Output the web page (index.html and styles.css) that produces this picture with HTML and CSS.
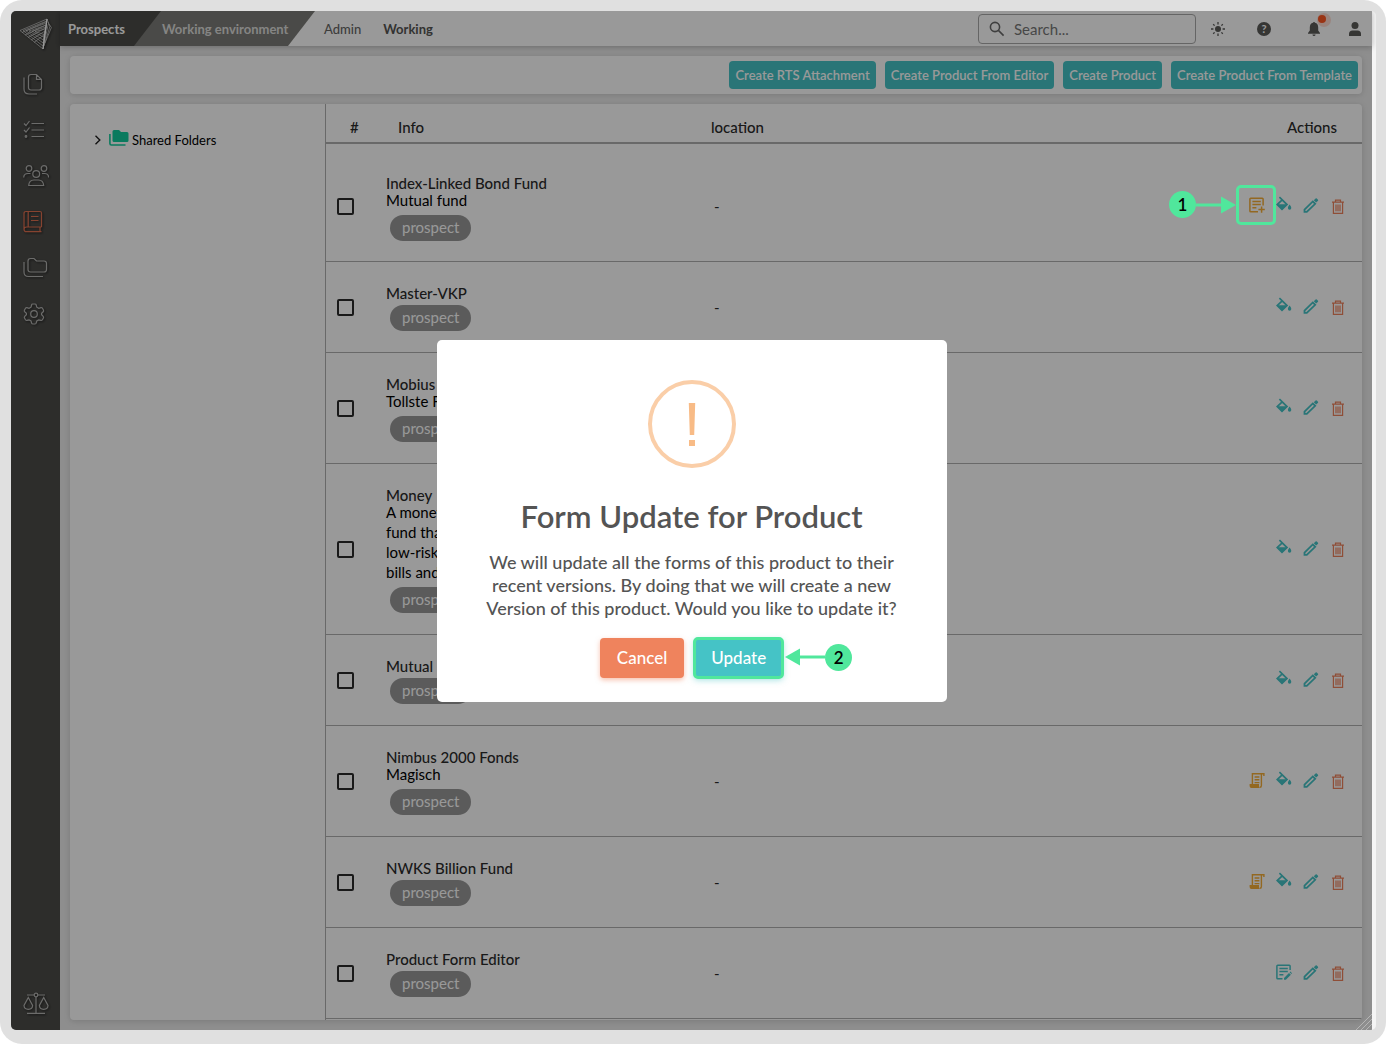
FILE: index.html
```html
<!DOCTYPE html>
<html lang="en">
<head>
    <meta charset="UTF-8">
    <meta name="viewport" content="width=device-width, initial-scale=1.0">
    <title>Prospects</title>
    <link rel="stylesheet" href="styles.css">
</head>
<body>

    <!-- Icons -->
    <svg class="icon-defs" aria-hidden="true">
        <symbol id="icon-fill" viewBox="0 0 16 20">
            <path d="M3.4 1.2 L6 3.6 L11 8.6 L6 13.4 L1.2 8.6 L6.2 3.8" fill="none" stroke="currentColor" stroke-width="1.7"/>
            <path d="M1 8.2 H11.4 L6 13.8 Z" fill="currentColor"/>
            <path d="M13.6 8.6 C14.6 10 15.3 11 15.3 12 A1.7 1.7 0 0 1 11.9 12 C11.9 11 12.6 10 13.6 8.6Z" fill="currentColor"/>
        </symbol>
        <symbol id="icon-edit" viewBox="0 0 16 20">
            <path d="M1.5 13.6 V15.9 H3.8 L12.2 7.8 L9.8 5.4 Z" fill="none" stroke="currentColor" stroke-width="1.8"/>
            <path d="M10.8 4.2 L12.6 2.4 Q13.2 1.9 13.8 2.4 L15 3.7 Q15.4 4.2 15 4.7 L13.2 6.6 Z" fill="currentColor"/>
        </symbol>
        <symbol id="icon-delete" viewBox="0 0 16 20">
            <path d="M2 6.2 H14 M5.5 6 V4.1 H10.5 V6 M3.4 6.5 V17.4 H12.6 V6.5 M6 8.5 V15.2 M8 8.5 V15.2 M10 8.5 V15.2" fill="none" stroke="currentColor" stroke-width="1.2"/>
        </symbol>
        <symbol id="icon-form-add" viewBox="0 0 16 20">
            <path d="M9 15.7 H1.7 Q0.9 15.7 0.9 14.9 V3.1 Q0.9 2.3 1.7 2.3 H13.3 Q14.1 2.3 14.1 3.1 V9.5 M3.4 5.4 H11.8 M3.4 8.5 H11.8 M3.4 11.8 H7.4 M12.6 10.4 V16.8 M9.4 13.6 H15.8" fill="none" stroke="currentColor" stroke-width="1.5"/>
        </symbol>
        <symbol id="icon-form-edit" viewBox="0 0 16 20">
            <path d="M6.5 15.7 H1.7 Q0.9 15.7 0.9 14.9 V3.1 Q0.9 2.3 1.7 2.3 H13.3 Q14.1 2.3 14.1 3.1 V7 M3.4 5.4 H11.8 M3.4 8.5 H11.8 M3.4 11.8 H7.4" fill="none" stroke="currentColor" stroke-width="1.5"/>
            <path d="M8 16.8 V14.9 L13 9.9 L14.9 11.8 L9.9 16.8 Z M13.6 9.3 L14.4 8.5 L16 10.2 L15.4 11 Z" fill="currentColor"/>
        </symbol>
        <symbol id="icon-script" viewBox="0 0 16 20">
            <path d="M3.4 13 V2.8 H14.9 V5 M12.4 2.8 V14.4 Q12.4 16.2 10.8 16.2 M5.6 6 H10.4 M5.6 8.8 H10.4 M5.6 11.6 H10.4" fill="none" stroke="currentColor" stroke-width="1.4"/>
            <path d="M0.6 13 H10 V15.2 Q10 16.9 11.4 16.9 H2.4 Q0.6 16.9 0.6 15 Z" fill="currentColor"/>
        </symbol>
        <symbol id="icon-arrow" viewBox="0 0 40 18">
            <path d="M0 9 H28" stroke="currentColor" stroke-width="3"/>
            <path d="M25 0.5 L40 9 L25 17.5 Z" fill="currentColor"/>
        </symbol>
    </svg>

    <div class="frame">
        <div class="window">
            <div class="app">

                <!-- Sidebar -->
                <nav class="sidebar">
                    <a href="#" class="logo" aria-label="Home">
                        <svg width="34" height="32" viewBox="0 0 34 32">
                            <path d="M1 12.5 L28 1 L24 31 Z M4 12.6 L27.8 3 L24 28 Z M7 12.8 L27.6 5 L24.2 25 Z M10 13 L27.4 7 L24.4 22 Z M13 13.2 L27.2 9 L24.6 19 Z M16 13.4 L27 11 L24.8 16.5 Z M3 14.5 L27 4 M6 17 L27 7 M9 19.5 L26.5 10 M12 22 L26 13 M15 24.5 L26 16"/>
                            <path d="M28 1 L29.5 5 L24 31 M29 4 L31 8 L25 28 M29.8 6 L32.4 9.5 L26 25"/>
                            <path class="edge" d="M28 1 L24 31"/>
                        </svg>
                    </a>
                    <a href="#" aria-label="Documents">
                        <svg width="26" height="24" viewBox="0 0 26 24">
                            <path d="M8 2.5 H13.5 L18.5 7.5 V15.5 Q18.5 18 16 18 H8 Q5.5 18 5.5 15.5 V5 Q5.5 2.5 8 2.5 Z M13.5 2.7 V7.3 H18.3 M1 5.5 V17 Q1 22 6 22 H14"/>
                        </svg>
                    </a>
                    <a href="#" aria-label="Tasks">
                        <svg width="26" height="24" viewBox="0 0 26 24">
                            <path d="M8.5 5.5 H21 M8.5 12 H21 M8.5 18.5 H21 M1 5.5 L3 7.5 L6.5 3 M1 12 L3 14 L6.5 9.5"/>
                            <circle cx="3" cy="18.5" r="0.8"/>
                        </svg>
                    </a>
                    <a href="#" aria-label="People">
                        <svg width="26" height="24" viewBox="0 0 26 24">
                            <circle cx="6" cy="4.5" r="2.8"/>
                            <circle cx="21" cy="4.5" r="2.8"/>
                            <circle cx="13.2" cy="10" r="3.4"/>
                            <path d="M5.7 21.5 Q6 16 11 16 H15.5 Q20.2 16 20.7 21.5 Z M0.7 13.5 Q0.8 9.5 5 9.5 H7.5 M25.6 13.5 Q25.6 9.5 21.5 9.5 H19"/>
                        </svg>
                    </a>
                    <a href="#" class="active" aria-label="Prospects">
                        <svg width="26" height="24" viewBox="0 0 26 24">
                            <path d="M18.5 17 H3.5 Q1 17 1 19.2 Q1 21.7 3.5 21.7 H18.5 M1 19.5 V3.5 Q1 1.5 3 1.5 H17 Q18.5 1.5 18.5 3 V17 M5.2 1.5 V17 M8 6.5 H15.5 M8 10.5 H15.5 M17 17 V21.5"/>
                        </svg>
                    </a>
                    <a href="#" aria-label="Folders">
                        <svg width="26" height="24" viewBox="0 0 26 24">
                            <path d="M7.5 2.5 H11 L13.5 5 H21 Q23.5 5 23.5 7.5 V13.5 Q23.5 16 21 16 H7.5 Q5 16 5 13.5 V5 Q5 2.5 7.5 2.5 Z M1 6 V16 Q1 20.5 5.5 20.5 H20"/>
                        </svg>
                    </a>
                    <a href="#" aria-label="Settings">
                        <svg width="26" height="24" viewBox="0 0 26 24">
                            <path d="M9.5 2 H12 Q13 2 13.2 3 L13.8 5.2 L15.8 6.3 L18 5.7 Q19 5.5 19.5 6.3 L20.5 8.2 Q20.9 9 20.2 9.8 L18.6 11.3 V12.7 L20.2 14.4 Q20.9 15.2 20.4 16 L19.4 17.8 Q18.9 18.6 18 18.4 L15.8 17.8 L13.8 18.9 L13.2 21 Q13 22 12 22 H9.8 Q8.9 22 8.6 21 L8 18.9 L6 17.8 L3.9 18.4 Q3 18.6 2.5 17.8 L1.5 16 Q1 15.2 1.7 14.4 L3.4 12.7 V11.3 L1.7 9.7 Q1 9 1.4 8.2 L2.5 6.3 Q3 5.5 3.9 5.7 L6 6.3 L8 5.2 L8.6 3 Q8.8 2 9.5 2 Z"/>
                            <circle cx="11" cy="12" r="3.3"/>
                        </svg>
                    </a>
                    <a href="#" class="bottom" aria-label="Legal">
                        <svg width="26" height="24" viewBox="0 0 26 24">
                            <circle cx="13" cy="3" r="1.8"/>
                            <path d="M13 5 V21 M4 21.3 H22 M4 3 H11 M15 3 H22 M5.3 5.5 L1 13.5 Q1.2 17.3 5.3 17.3 Q9.4 17.3 9.6 13.5 Z M20.7 5.5 L16.4 13.5 Q16.6 17.3 20.7 17.3 Q24.8 17.3 25 13.5 Z"/>
                        </svg>
                    </a>
                </nav>

                <div class="main">
                    <!-- Top bar -->
                    <header class="topbar">
                        <a href="#" class="crumb crumb-dark">Prospects</a>
                        <a href="#" class="crumb crumb-mid">Working environment</a>
                        <a href="#" class="top-link">Admin</a>
                        <a href="#" class="top-link current">Working</a>

                        <label class="search">
                            <svg width="16" height="16" viewBox="0 0 16 16" fill="none" stroke="#6a6a6a" stroke-width="1.6">
                                <circle cx="6" cy="6" r="4.6"/>
                                <path d="M9.4 9.4 L14.6 14.6"/>
                            </svg>
                            <input type="text" placeholder="Search..." aria-label="Search">
                        </label>

                        <div class="top-icons">
                            <button aria-label="Theme">
                                <svg width="14" height="14" viewBox="0 0 14 14">
                                    <circle cx="7" cy="7" r="3" fill="currentColor"/>
                                    <path d="M7 0 V2.4 M7 11.6 V14 M0 7 H2.4 M11.6 7 H14 M2.2 2.2 L3.6 3.6 M10.4 10.4 L11.8 11.8 M11.8 2.2 L10.4 3.6 M3.6 10.4 L2.2 11.8" stroke="currentColor" stroke-width="1.3"/>
                                </svg>
                            </button>
                            <button class="help" aria-label="Help">?</button>
                            <button class="bell" aria-label="Notifications">
                                <svg width="14" height="14" viewBox="0 0 14 14" fill="currentColor">
                                    <path d="M6 0.8 Q6 0 7 0 Q8 0 8 0.8 Q11.2 1.6 11.2 5.5 V8.5 L13 11 V11.8 H1 V11 L2.8 8.5 V5.5 Q2.8 1.6 6 0.8 Z M5.4 12.5 H8.6 Q8.4 14 7 14 Q5.6 14 5.4 12.5 Z"/>
                                </svg>
                                <span class="dot"></span>
                            </button>
                            <button class="account" aria-label="Account">
                                <svg width="14" height="14" viewBox="0 0 14 14" fill="currentColor">
                                    <circle cx="7" cy="3.5" r="3.5"/>
                                    <path d="M1 14 V12 Q1 8.5 4.5 8.5 H9.5 Q13 8.5 13 12 V14 Z"/>
                                </svg>
                            </button>
                        </div>
                    </header>

                    <div class="content">
                        <div class="card toolbar">
                            <button>Create RTS Attachment</button>
                            <button>Create Product From Editor</button>
                            <button>Create Product</button>
                            <button>Create Product From Template</button>
                        </div>

                        <div class="card panels">
                            <!-- Folder tree -->
                            <aside class="tree">
                                <button class="tree-item">
                                    <svg width="8" height="10" viewBox="0 0 8 10" fill="none" stroke="#222222" stroke-width="1.4"><path d="M1.5 0.8 L5.8 5 L1.5 9.2"/></svg>
                                    <svg class="folder" width="20" height="18" viewBox="0 0 20 18">
                                        <path d="M5 1 H10 L12 3 H18 Q19.5 3 19.5 4.5 V11.5 Q19.5 13 18 13 H5 Q3.5 13 3.5 11.5 V2.5 Q3.5 1 5 1 Z" fill="#12cb9d"/>
                                        <path d="M0.9 5 V14.5 Q0.9 16 2.4 16 H16.5" fill="none" stroke="#12cb9d" stroke-width="1.6"/>
                                    </svg>
                                    <span>Shared Folders</span>
                                </button>
                            </aside>

                            <!-- Products -->
                            <div class="table-wrap">
                                <table>
                                    <thead>
                                        <tr>
                                            <th class="col-check">#</th>
                                            <th class="col-info">Info</th>
                                            <th class="col-location">location</th>
                                            <th class="col-actions">Actions</th>
                                        </tr>
                                    </thead>
                                    <tbody>
                                        <tr class="first">
                                            <td><input type="checkbox" aria-label="Index-Linked Bond Fund"></td>
                                            <td class="info">
                                                <div class="name">Index-Linked Bond Fund</div>
                                                <div class="desc">Mutual fund</div>
                                                <span class="chip">prospect</span>
                                            </td>
                                            <td class="location">-</td>
                                            <td>
                                                <div class="actions">
                                                    <button class="gold highlighted" aria-label="Update form">
                                                        <svg><use href="#icon-form-add"/></svg>
                                                        <span class="highlight"></span>
                                                        <span class="callout callout-left">
                                                            <span class="number">1</span>
                                                            <svg><use href="#icon-arrow"/></svg>
                                                        </span>
                                                    </button>
                                                    <button aria-label="Fill"><svg><use href="#icon-fill"/></svg></button>
                                                    <button aria-label="Edit"><svg><use href="#icon-edit"/></svg></button>
                                                    <button class="red" aria-label="Delete"><svg><use href="#icon-delete"/></svg></button>
                                                </div>
                                            </td>
                                        </tr>
                                        <tr>
                                            <td><input type="checkbox" aria-label="Master-VKP"></td>
                                            <td class="info">
                                                <div class="name">Master-VKP</div>
                                                <span class="chip">prospect</span>
                                            </td>
                                            <td class="location">-</td>
                                            <td>
                                                <div class="actions">
                                                    <button aria-label="Fill"><svg><use href="#icon-fill"/></svg></button>
                                                    <button aria-label="Edit"><svg><use href="#icon-edit"/></svg></button>
                                                    <button class="red" aria-label="Delete"><svg><use href="#icon-delete"/></svg></button>
                                                </div>
                                            </td>
                                        </tr>
                                        <tr>
                                            <td><input type="checkbox" aria-label="Mobius"></td>
                                            <td class="info">
                                                <div class="name">Mobius</div>
                                                <div class="desc">Tollste F</div>
                                                <span class="chip">prospect</span>
                                            </td>
                                            <td class="location"></td>
                                            <td>
                                                <div class="actions">
                                                    <button aria-label="Fill"><svg><use href="#icon-fill"/></svg></button>
                                                    <button aria-label="Edit"><svg><use href="#icon-edit"/></svg></button>
                                                    <button class="red" aria-label="Delete"><svg><use href="#icon-delete"/></svg></button>
                                                </div>
                                            </td>
                                        </tr>
                                        <tr>
                                            <td><input type="checkbox" aria-label="Money"></td>
                                            <td class="info">
                                                <div class="name">Money</div>
                                                <div class="desc">A money<br>fund that<br>low-risk<br>bills and</div>
                                                <span class="chip">prospect</span>
                                            </td>
                                            <td class="location"></td>
                                            <td>
                                                <div class="actions">
                                                    <button aria-label="Fill"><svg><use href="#icon-fill"/></svg></button>
                                                    <button aria-label="Edit"><svg><use href="#icon-edit"/></svg></button>
                                                    <button class="red" aria-label="Delete"><svg><use href="#icon-delete"/></svg></button>
                                                </div>
                                            </td>
                                        </tr>
                                        <tr>
                                            <td><input type="checkbox" aria-label="Mutual"></td>
                                            <td class="info">
                                                <div class="name">Mutual</div>
                                                <span class="chip">prospect</span>
                                            </td>
                                            <td class="location"></td>
                                            <td>
                                                <div class="actions">
                                                    <button aria-label="Fill"><svg><use href="#icon-fill"/></svg></button>
                                                    <button aria-label="Edit"><svg><use href="#icon-edit"/></svg></button>
                                                    <button class="red" aria-label="Delete"><svg><use href="#icon-delete"/></svg></button>
                                                </div>
                                            </td>
                                        </tr>
                                        <tr>
                                            <td><input type="checkbox" aria-label="Nimbus 2000 Fonds"></td>
                                            <td class="info">
                                                <div class="name">Nimbus 2000 Fonds</div>
                                                <div class="desc">Magisch</div>
                                                <span class="chip">prospect</span>
                                            </td>
                                            <td class="location">-</td>
                                            <td>
                                                <div class="actions">
                                                    <button class="gold" aria-label="Script"><svg><use href="#icon-script"/></svg></button>
                                                    <button aria-label="Fill"><svg><use href="#icon-fill"/></svg></button>
                                                    <button aria-label="Edit"><svg><use href="#icon-edit"/></svg></button>
                                                    <button class="red" aria-label="Delete"><svg><use href="#icon-delete"/></svg></button>
                                                </div>
                                            </td>
                                        </tr>
                                        <tr>
                                            <td><input type="checkbox" aria-label="NWKS Billion Fund"></td>
                                            <td class="info">
                                                <div class="name">NWKS Billion Fund</div>
                                                <span class="chip">prospect</span>
                                            </td>
                                            <td class="location">-</td>
                                            <td>
                                                <div class="actions">
                                                    <button class="gold" aria-label="Script"><svg><use href="#icon-script"/></svg></button>
                                                    <button aria-label="Fill"><svg><use href="#icon-fill"/></svg></button>
                                                    <button aria-label="Edit"><svg><use href="#icon-edit"/></svg></button>
                                                    <button class="red" aria-label="Delete"><svg><use href="#icon-delete"/></svg></button>
                                                </div>
                                            </td>
                                        </tr>
                                        <tr>
                                            <td><input type="checkbox" aria-label="Product Form Editor"></td>
                                            <td class="info">
                                                <div class="name">Product Form Editor</div>
                                                <span class="chip">prospect</span>
                                            </td>
                                            <td class="location">-</td>
                                            <td>
                                                <div class="actions">
                                                    <button aria-label="Edit form"><svg><use href="#icon-form-edit"/></svg></button>
                                                    <button aria-label="Edit"><svg><use href="#icon-edit"/></svg></button>
                                                    <button class="red" aria-label="Delete"><svg><use href="#icon-delete"/></svg></button>
                                                </div>
                                            </td>
                                        </tr>
                                    </tbody>
                                </table>
                            </div>
                        </div>
                    </div>
                </div>

                <svg class="grip" width="16" height="16" viewBox="0 0 16 16" stroke="#b5b5b5" stroke-width="1">
                    <path d="M0 16 L16 0 M5 16 L16 5 M10 16 L16 10"/>
                </svg>

                <!-- Confirm dialog -->
                <div class="overlay">
                    <div class="modal" role="dialog" aria-labelledby="modalTitle">
                        <div class="warning-icon">
                            <svg width="10" height="44" viewBox="0 0 10 44" fill="#f8bb86">
                                <path d="M1.8 1 H8.2 L7.2 33 H2.8 Z M2 38 H8 V44 H2 Z"/>
                            </svg>
                        </div>
                        <h2 id="modalTitle">Form Update for Product</h2>
                        <p>We will update all the forms of this product to their recent versions. By doing that we will create a new Version of this product. Would you like to update it?</p>
                        <div class="modal-actions">
                            <button class="cancel">Cancel</button>
                            <button class="update">Update
                                <span class="callout callout-right">
                                    <svg><use href="#icon-arrow"/></svg>
                                    <span class="number">2</span>
                                </span>
                            </button>
                        </div>
                    </div>
                </div>

            </div>
        </div>
    </div>

</body>
</html>
```
FILE: styles.css
```css
* {
    box-sizing: border-box;
}

body {
    font-family: Lato, "Open Sans", sans-serif;
    font-size: 15px;
    margin: 0;
    background: #ffffff;
    color: #2b2b2b;
}

button {
    font-family: inherit;
    background: none;
    border: none;
    padding: 0;
    cursor: pointer;
}

a {
    text-decoration: none;
}

.icon-defs {
    display: none;
}

.frame {
    height: 100vh;
    padding: 11px 10px 14px 11px;
    background: #e0e0e0;
    border-radius: 22px;
}

.window {
    height: 100%;
    padding-right: 4px;
    background: #f5f5f5;
    border-radius: 5px;
    overflow: hidden;
}

.app {
    position: relative;
    display: flex;
    height: 100%;
    background: #ededed;
}

/* Sidebar */
.sidebar {
    width: 49px;
    background: #4c4c49;
    display: flex;
    flex-direction: column;
    align-items: flex-start;
    gap: 22px;
    padding: 7px 0 14px 12px;
}

.sidebar a {
    display: flex;
    color: #b4b4b2;
    filter: drop-shadow(1px 1px 1px rgba(0, 0, 0, 0.6));
}

.sidebar a svg {
    fill: none;
    stroke: currentColor;
    stroke-width: 1.2;
}

.sidebar .logo {
    margin-left: -4px;
}

.sidebar .logo svg {
    stroke: #d0d0ce;
    stroke-width: 0.7;
}

.sidebar .logo .edge {
    stroke: #ffffff;
    stroke-width: 1.2;
}

.sidebar .active {
    color: #e07050;
}

.sidebar .bottom {
    margin-top: auto;
}

.main {
    flex: 1;
    min-width: 0;
    display: flex;
    flex-direction: column;
}

/* Top bar */
.topbar {
    height: 35px;
    display: flex;
    align-items: center;
    background: #ffffff;
    box-shadow: 0 1px 6px rgba(0, 0, 0, 0.25);
    font-size: 13px;
}

.crumb {
    height: 35px;
    line-height: 36px;
    font-weight: bold;
    clip-path: polygon(0 0, 100% 0, calc(100% - 27px) 100%, 0 100%);
}

.crumb-dark {
    width: 101px;
    padding-left: 8px;
    background: #4c4c49;
    color: #ffffff;
    position: relative;
    z-index: 1;
}

.crumb-mid {
    width: 181px;
    margin-left: -27px;
    padding-left: 28px;
    background: #7c7c78;
    color: #dededc;
}

.top-link {
    color: #666664;
    font-weight: 500;
    margin-left: 9px;
}

.top-link.current {
    color: #555553;
    font-weight: bold;
    margin-left: 22px;
}

.search {
    width: 218px;
    height: 30px;
    margin-left: auto;
    padding: 0 10px;
    display: flex;
    align-items: center;
    gap: 9px;
    border: 1px solid #a8a8a8;
    border-radius: 4px;
}

.search input {
    flex: 1;
    min-width: 0;
    border: none;
    outline: none;
    padding: 0;
    background: none;
    font-family: inherit;
    font-size: 15px;
}

.search input::placeholder {
    color: #777777;
    opacity: 1;
}

.top-icons {
    display: flex;
    align-items: center;
    gap: 32px;
    padding: 0 10px 0 15px;
}

.top-icons button {
    display: flex;
    color: #5a5a58;
}

.top-icons .help {
    width: 14px;
    height: 14px;
    border-radius: 50%;
    background: #5a5a58;
    color: #ffffff;
    font-size: 11px;
    line-height: 14px;
    font-weight: bold;
    justify-content: center;
}

.top-icons .bell {
    position: relative;
    margin-left: 4px;
}

.top-icons .account {
    margin-left: -5px;
}

.bell .dot {
    position: absolute;
    top: -7px;
    left: 11px;
    width: 8px;
    height: 8px;
    border-radius: 50%;
    background: #ff5722;
    box-shadow: 2px 1px 0 3px rgba(255, 87, 34, 0.2);
}

/* Content */
.content {
    flex: 1;
    min-height: 0;
    display: flex;
    flex-direction: column;
    gap: 10px;
    padding: 10px;
}

.card {
    background: #ffffff;
    border-radius: 4px;
    box-shadow: 0 1px 6px rgba(0, 0, 0, 0.15);
}

.toolbar {
    display: flex;
    justify-content: flex-end;
    gap: 9px;
    padding: 5px 4px 5px 10px;
}

.toolbar button {
    height: 28px;
    padding: 0 6px;
    border-radius: 4px;
    background: #45c3c6;
    color: #ffffff;
    font-size: 13px;
    font-weight: 600;
}

.panels {
    flex: 1;
    min-height: 0;
    display: flex;
    overflow: hidden;
}

.tree {
    width: 255px;
    padding: 25px 24px;
}

.tree-item {
    display: flex;
    align-items: center;
    color: #000000;
    font-size: 13px;
}

.tree-item .folder {
    margin: 0 3px 4px 7px;
}

.table-wrap {
    flex: 1;
    border-left: 1px solid #b0b0b0;
    overflow: hidden;
}

table {
    width: 100%;
    border-collapse: collapse;
    table-layout: fixed;
}

th {
    height: 39px;
    padding: 8px 0 0;
    font-weight: 500;
    text-align: left;
    border-bottom: 2px solid #b0b0b0;
}

.col-check {
    width: 60px;
    padding-left: 24px;
}

.col-info {
    width: 325px;
    padding-left: 12px;
}

.col-actions {
    padding-right: 25px;
    text-align: right;
}

td {
    padding: 20px 0;
    border-bottom: 1px solid #b0b0b0;
}

.info {
    padding: 24px 0 21px;
}

.first td {
    padding-top: 27px;
}

.first .info {
    padding: 32px 0 20px;
}

td input[type="checkbox"] {
    appearance: none;
    display: block;
    width: 17px;
    height: 17px;
    margin: 0 0 0 11px;
    border: 2px solid #2b2b2b;
    border-radius: 2px;
}

.name {
    line-height: 14px;
    font-weight: 500;
}

.desc {
    line-height: 20px;
    color: #000000;
}

.chip {
    display: block;
    width: fit-content;
    margin: 5px 0 0 4px;
    padding: 0 12px;
    height: 26px;
    line-height: 25px;
    border-radius: 13px;
    background: #989898;
    color: #ffffff;
}

.location {
    padding-left: 3px;
}

.actions {
    display: flex;
    justify-content: flex-end;
    gap: 11px;
    padding-right: 16px;
}

.actions button {
    display: flex;
    color: #45c3c6;
}

.actions button > svg {
    width: 16px;
    height: 20px;
}

.actions .gold {
    color: #f5ae38;
}

.actions .red {
    color: #ef835d;
}

.grip {
    position: absolute;
    right: 0;
    bottom: 0;
    z-index: 11;
}

/* Step callouts */
.highlighted {
    position: relative;
}

.highlight {
    position: absolute;
    top: -11px;
    left: -13px;
    width: 40px;
    height: 40px;
    border: 3px solid #50e79c;
    border-radius: 5px;
    z-index: 20;
}

.callout {
    position: absolute;
    display: flex;
    align-items: center;
    z-index: 20;
    color: #50e79c;
}

.callout .number {
    width: 27px;
    height: 27px;
    border-radius: 50%;
    background: #50e79c;
    color: #000000;
    font-size: 17px;
    line-height: 27px;
    font-weight: 600;
    text-align: center;
}

.callout svg {
    width: 40px;
    height: 18px;
}

.callout-left {
    top: -5px;
    right: 29px;
}

.callout-right {
    top: 6px;
    left: calc(100% + 2px);
}

.callout-right svg {
    transform: scaleX(-1);
}

/* Dialog */
.overlay {
    position: absolute;
    inset: 0;
    display: flex;
    align-items: center;
    justify-content: center;
    background: rgba(0, 0, 0, 0.4);
    z-index: 10;
}

.modal {
    width: 510px;
    padding: 40px 40px 24px;
    border-radius: 5px;
    background: #ffffff;
    color: #545454;
    text-align: center;
}

.warning-icon {
    display: flex;
    align-items: center;
    justify-content: center;
    width: 88px;
    height: 88px;
    margin: 0 auto;
    border: 4px solid #facea8;
    border-radius: 50%;
}

.modal h2 {
    margin: 28px 0 15px;
    font-size: 31px;
    line-height: 40px;
    font-weight: 600;
}

.modal p {
    margin: 0;
    font-size: 18px;
    line-height: 23px;
    font-weight: 500;
}

.modal-actions {
    display: flex;
    justify-content: center;
    gap: 10px;
    margin-top: 18px;
}

.modal-actions button {
    position: relative;
    height: 40px;
    padding: 0 17px;
    border-radius: 4px;
    color: #ffffff;
    font-size: 17px;
    font-weight: 500;
}

.modal-actions .cancel {
    background: #ef835d;
    box-shadow: 0 2px 5px rgba(239, 131, 93, 0.5);
}

.modal-actions .update {
    background: #45c3c6;
    outline: 3px solid #50e79c;
    outline-offset: -2px;
    box-shadow: 0 2px 6px rgba(69, 195, 198, 0.5);
}
```
